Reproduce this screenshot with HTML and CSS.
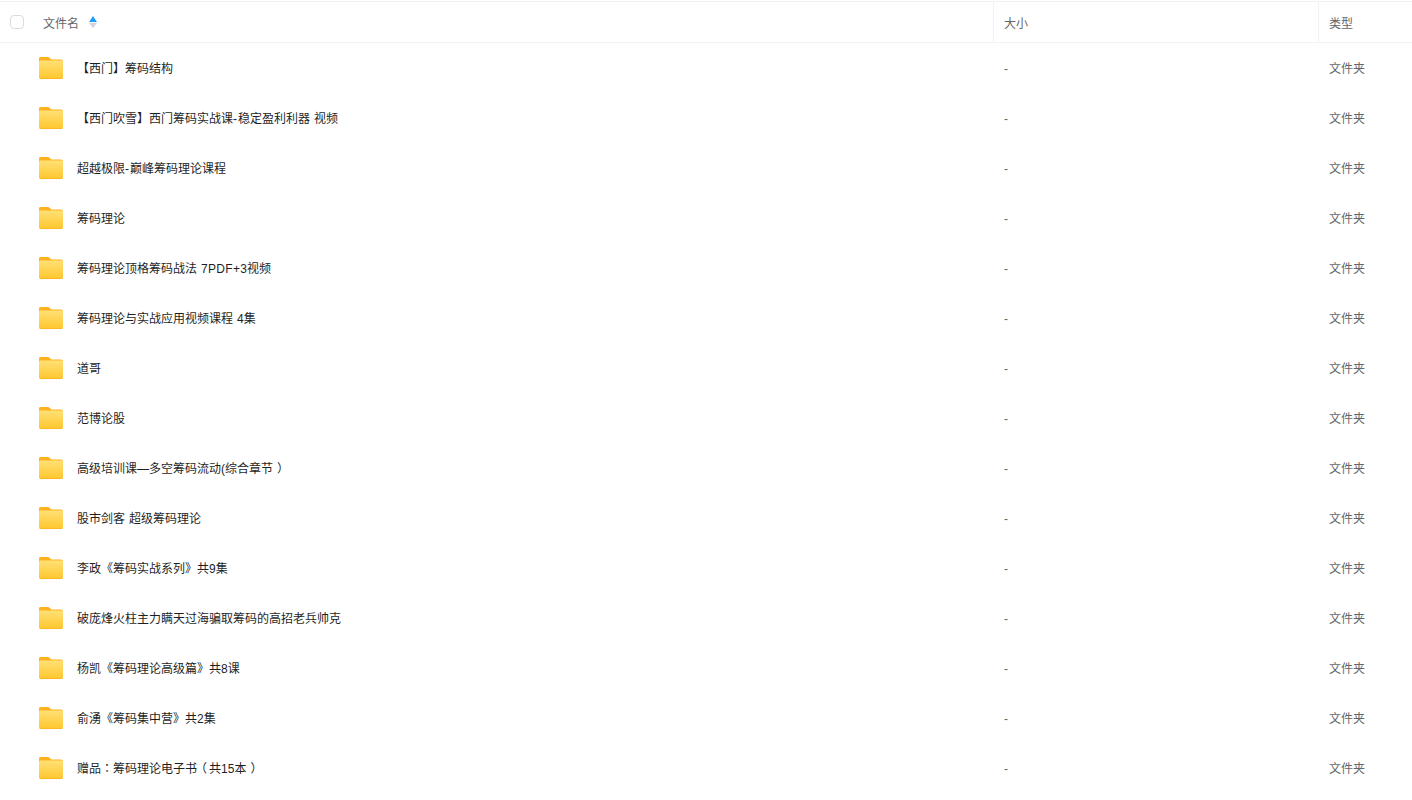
FILE: index.html
```html
<!DOCTYPE html>
<html>
  <head>
    <title>文件列表</title>
    <link rel="stylesheet" href="styles.css">
  </head>
  <body>
    <svg class="icon-defs" width="0" height="0">
      <defs>
        <linearGradient id="folderFront" x1="0" y1="0" x2="0" y2="1">
          <stop offset="0" stop-color="#ffe075"/>
          <stop offset="1" stop-color="#ffc72e"/>
        </linearGradient>
        <symbol id="folder" viewBox="0 0 24 22">
          <path d="M1.5 0H8.5C9.6 0 10.2 .4 11 1.2L12.4 2.6H22C23.1 2.6 24 3.5 24 4.6V8H0V1.5C0 .7 .7 0 1.5 0Z" fill="#ffb21e"/>
          <path d="M1.5 3.6H22.5C23.3 3.6 24 4.3 24 5.1V19.8C24 21 23 22 21.8 22H2.2C1 22 0 21 0 19.8V5.1C0 4.3 .7 3.6 1.5 3.6Z" fill="url(#folderFront)"/>
          <path d="M0 20.2C0 21.2 1 22 2.2 22H21.8C23 22 24 21.2 24 20.2V19.6C24 20.6 23 21.2 21.8 21.2H2.2C1 21.2 0 20.6 0 19.6Z" fill="#ffb21e"/>
        </symbol>
      </defs>
    </svg>

    <div class="file-list">
      <div class="list-head">
        <div class="col-name">
          <span class="checkbox"></span>
          <span class="head-title">文件名</span>
          <span class="sort">
            <span class="sort-up"></span>
            <span class="sort-down"></span>
          </span>
        </div>
        <div class="col-size">大小</div>
        <div class="col-type">类型</div>
      </div>

      <div class="row">
        <div class="col-name"><svg class="folder"><use href="#folder"/></svg><span class="file-name">【西门】筹码结构</span></div>
        <div class="col-size"><span class="dash-cell">-</span></div>
        <div class="col-type"><span class="type-text">文件夹</span></div>
      </div>
      <div class="row">
        <div class="col-name"><svg class="folder"><use href="#folder"/></svg><span class="file-name">【西门吹雪】西门筹码实战课<span class="dash">-</span>稳定盈利利器 视频</span></div>
        <div class="col-size"><span class="dash-cell">-</span></div>
        <div class="col-type"><span class="type-text">文件夹</span></div>
      </div>
      <div class="row">
        <div class="col-name"><svg class="folder"><use href="#folder"/></svg><span class="file-name">超越极限<span class="dash">-</span>巅峰筹码理论课程</span></div>
        <div class="col-size"><span class="dash-cell">-</span></div>
        <div class="col-type"><span class="type-text">文件夹</span></div>
      </div>
      <div class="row">
        <div class="col-name"><svg class="folder"><use href="#folder"/></svg><span class="file-name">筹码理论</span></div>
        <div class="col-size"><span class="dash-cell">-</span></div>
        <div class="col-type"><span class="type-text">文件夹</span></div>
      </div>
      <div class="row">
        <div class="col-name"><svg class="folder"><use href="#folder"/></svg><span class="file-name">筹码理论顶格筹码战法 <span class="wide">7PDF+</span>3视频</span></div>
        <div class="col-size"><span class="dash-cell">-</span></div>
        <div class="col-type"><span class="type-text">文件夹</span></div>
      </div>
      <div class="row">
        <div class="col-name"><svg class="folder"><use href="#folder"/></svg><span class="file-name">筹码理论与实战应用视频课程 4集</span></div>
        <div class="col-size"><span class="dash-cell">-</span></div>
        <div class="col-type"><span class="type-text">文件夹</span></div>
      </div>
      <div class="row">
        <div class="col-name"><svg class="folder"><use href="#folder"/></svg><span class="file-name">道哥</span></div>
        <div class="col-size"><span class="dash-cell">-</span></div>
        <div class="col-type"><span class="type-text">文件夹</span></div>
      </div>
      <div class="row">
        <div class="col-name"><svg class="folder"><use href="#folder"/></svg><span class="file-name">范博论股</span></div>
        <div class="col-size"><span class="dash-cell">-</span></div>
        <div class="col-type"><span class="type-text">文件夹</span></div>
      </div>
      <div class="row">
        <div class="col-name"><svg class="folder"><use href="#folder"/></svg><span class="file-name">高级培训课—多空筹码流动(综合章节<span class="paren-close">）</span></span></div>
        <div class="col-size"><span class="dash-cell">-</span></div>
        <div class="col-type"><span class="type-text">文件夹</span></div>
      </div>
      <div class="row">
        <div class="col-name"><svg class="folder"><use href="#folder"/></svg><span class="file-name">股市剑客 超级筹码理论</span></div>
        <div class="col-size"><span class="dash-cell">-</span></div>
        <div class="col-type"><span class="type-text">文件夹</span></div>
      </div>
      <div class="row">
        <div class="col-name"><svg class="folder"><use href="#folder"/></svg><span class="file-name">李政《筹码实战系列》共9集</span></div>
        <div class="col-size"><span class="dash-cell">-</span></div>
        <div class="col-type"><span class="type-text">文件夹</span></div>
      </div>
      <div class="row">
        <div class="col-name"><svg class="folder"><use href="#folder"/></svg><span class="file-name">破庞烽火柱主力瞒天过海骗取筹码的高招老兵帅克</span></div>
        <div class="col-size"><span class="dash-cell">-</span></div>
        <div class="col-type"><span class="type-text">文件夹</span></div>
      </div>
      <div class="row">
        <div class="col-name"><svg class="folder"><use href="#folder"/></svg><span class="file-name">杨凯《筹码理论高级篇》共8课</span></div>
        <div class="col-size"><span class="dash-cell">-</span></div>
        <div class="col-type"><span class="type-text">文件夹</span></div>
      </div>
      <div class="row">
        <div class="col-name"><svg class="folder"><use href="#folder"/></svg><span class="file-name">俞湧《筹码集中营》共2集</span></div>
        <div class="col-size"><span class="dash-cell">-</span></div>
        <div class="col-type"><span class="type-text">文件夹</span></div>
      </div>
      <div class="row">
        <div class="col-name"><svg class="folder"><use href="#folder"/></svg><span class="file-name">赠品<span class="punct">：</span>筹码理论电子书<span class="paren-open">（</span>共15本<span class="paren-close">）</span></span></div>
        <div class="col-size"><span class="dash-cell">-</span></div>
        <div class="col-type"><span class="type-text">文件夹</span></div>
      </div>
    </div>
  </body>
</html>
```

FILE: styles.css
```css
html,
body {
  height: 800px;
  overflow: hidden;
}

body {
  margin: 0;
  background-color: #fff;
  font-family: "Liberation Sans", "Noto Sans CJK SC", sans-serif;
  font-size: 12px;
  color: #666;
}

.icon-defs {
  display: block;
  height: 0;
}

.file-list {
  padding-top: 1px;
}

.list-head {
  display: flex;
  height: 40px;
  border-top: 1px solid #f2f2f2;
  border-bottom: 1px solid #f2f2f2;
}

.row {
  display: flex;
  height: 50px;
}

.col-name {
  display: flex;
  align-items: center;
  width: 993px;
  flex-shrink: 0;
}

.col-size {
  display: flex;
  align-items: center;
  width: 325px;
  flex-shrink: 0;
  padding-left: 11px;
  box-sizing: border-box;
}

.col-type {
  display: flex;
  align-items: center;
  flex: 1;
  padding-left: 11px;
}

.list-head .col-size,
.list-head .col-type {
  border-left: 1px solid #f2f2f2;
}

.list-head .col-size {
  padding-left: 10px;
}

.list-head .col-type {
  padding-left: 10px;
}

.checkbox {
  width: 12px;
  height: 12px;
  margin-left: 10px;
  border: 1px solid #dcdcdc;
  border-radius: 4px;
}

.head-title {
  margin-left: 19px;
}

.sort {
  display: flex;
  flex-direction: column;
  gap: 1px;
  margin-left: 10px;
}

.sort-up {
  width: 0;
  height: 0;
  border-left: 4px solid transparent;
  border-right: 4px solid transparent;
  border-bottom: 6px solid #1e9fff;
}

.sort-down {
  width: 0;
  height: 0;
  border-left: 4px solid transparent;
  border-right: 4px solid transparent;
  border-top: 5px solid #d0d4dc;
}

.folder {
  width: 24px;
  height: 22px;
  margin-left: 39px;
  flex-shrink: 0;
}

.file-name {
  margin-left: 14px;
  padding-bottom: 2px;
  color: #1f1f1f;
  white-space: nowrap;
  word-spacing: 0.7px;
}

.type-text {
  padding-bottom: 2px;
}

.dash-cell {
  padding-top: 2px;
}

.dash {
  letter-spacing: 1px;
}

.wide {
  letter-spacing: 0.3px;
}

.punct {
  font-family: "Noto Sans CJK TC", sans-serif;
}

/* parens sit in the middle of their cell in the original font */
.paren-open {
  margin-left: -2px;
  margin-right: 2px;
}

.paren-close {
  margin-left: 4px;
  margin-right: -4px;
}
```
